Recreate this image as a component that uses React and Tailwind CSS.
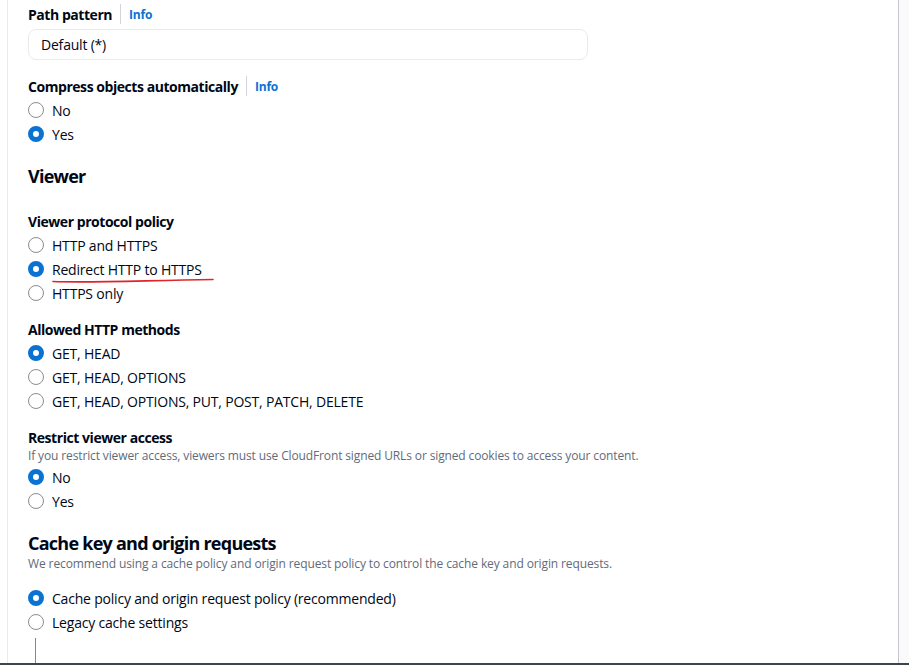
import React from 'react'

const font = { fontFamily: '"Open Sans", "Noto Sans", Arial, sans-serif' }

function Radio({ checked, label, children }) {
  return (
    <div className="flex items-center h-6">
      {checked ? (
        <span className="w-4 h-4 rounded-full border-[5px] border-[#0972d3] bg-white shrink-0" />
      ) : (
        <span className="w-4 h-4 rounded-full border-[1.5px] border-[#8c8c94] bg-white shrink-0" />
      )}
      <span className="relative ml-2 text-[14px] tracking-[-0.2px] text-[#000716]">
        {label}
        {children}
      </span>
    </div>
  )
}

function FieldLabel({ text, info }) {
  return (
    <div className="flex items-center h-[22px] text-[14px] font-bold tracking-[-0.45px] text-[#000716]">
      <span>{text}</span>
      {info && (
        <>
          <span className="mx-[8px] w-px h-[20px] bg-[#d1d5db]" />
          <span className="pt-px text-[12px] tracking-[-0.2px] text-[#0972d3]">Info</span>
        </>
      )}
    </div>
  )
}

export default function App() {
  return (
    <div className="w-[909px] h-[665px] flex flex-col bg-white overflow-hidden" style={font}>
      <div className="flex-1 flex min-h-0">
        <div className="w-[7px] shrink-0" />
        <main className="flex-1 border-l border-[#e9ebed] border-r border-r-[#c6c6cd] pl-5 pt-[3px] overflow-hidden">
          <FieldLabel text="Path pattern" info />
          <div className="mt-1 w-[560px] h-[31px] rounded-lg border border-[#e9ebed] flex items-center px-3 text-[14px] tracking-[-0.2px] text-[#000716]">
            Default (*)
          </div>

          <div className="mt-[15px]">
            <FieldLabel text="Compress objects automatically" info />
          </div>
          <div className="mt-px">
            <Radio label="No" />
            <Radio checked label="Yes" />
          </div>

          <h2 className="mt-[19px] h-[22px] flex items-center text-[18px] font-bold tracking-[-0.75px] text-[#000716]">Viewer</h2>

          <div className="mt-[23px]">
            <FieldLabel text="Viewer protocol policy" />
          </div>
          <div className="mt-px">
            <Radio label="HTTP and HTTPS" />
            <Radio checked label="Redirect HTTP to HTTPS">
              <svg className="absolute left-0 top-[19px]" width="164" height="6" viewBox="0 0 164 6" fill="none">
                <path d="M1 3.5 C 40 5, 90 2.5, 161 1.5" stroke="#e0242b" strokeWidth="1.6" strokeLinecap="round" />
              </svg>
            </Radio>
            <Radio label="HTTPS only" />
          </div>

          <div className="mt-[13px]">
            <FieldLabel text="Allowed HTTP methods" />
          </div>
          <div className="mt-px">
            <Radio checked label="GET, HEAD" />
            <Radio label="GET, HEAD, OPTIONS" />
            <Radio label="GET, HEAD, OPTIONS, PUT, POST, PATCH, DELETE" />
          </div>

          <div className="mt-[13px]">
            <FieldLabel text="Restrict viewer access" />
          </div>
          <p className="h-[16px] flex items-center text-[12px] tracking-[-0.13px] text-[#5f6b7a]">
            If you restrict viewer access, viewers must use CloudFront signed URLs or signed cookies to access your content.
          </p>
          <div className="mt-px">
            <Radio checked label="No" />
            <Radio label="Yes" />
          </div>

          <h2 className="mt-[19px] h-[22px] flex items-center text-[18px] font-bold tracking-[-0.75px] text-[#000716]">
            Cache key and origin requests
          </h2>
          <p className="mt-[2px] h-4 flex items-center text-[12px] tracking-[-0.11px] text-[#5f6b7a]">
            We recommend using a cache policy and origin request policy to control the cache key and origin requests.
          </p>
          <div className="mt-[14px]">
            <Radio checked label="Cache policy and origin request policy (recommended)" />
            <Radio label="Legacy cache settings" />
          </div>
          <div className="mt-1 ml-[7px] border-l border-[#7d8998] pl-4 pt-[22px]">
            <div className="h-[22px] flex items-center text-[14px] font-bold tracking-[-0.45px] text-[#000716]">Cache policy</div>
          </div>
        </main>
        <div className="w-[10px] shrink-0 bg-[#fafafa]" />
      </div>
      <div className="h-[2px] bg-[#3b4450]" />
    </div>
  )
}
